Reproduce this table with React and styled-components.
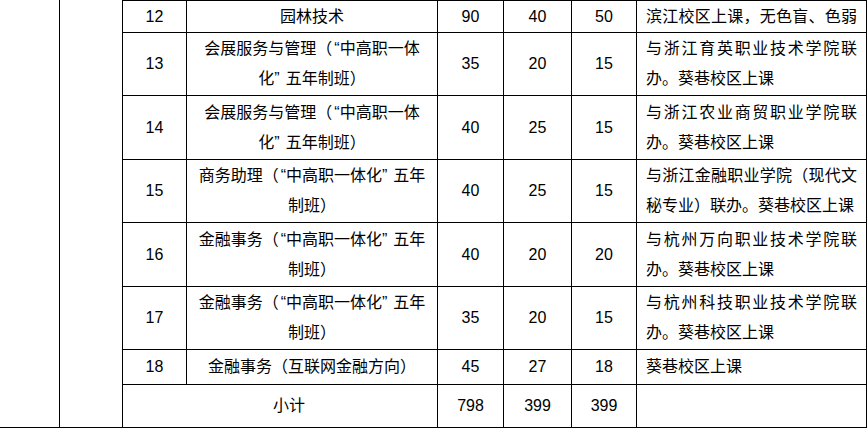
import React from "react";
import styled, { createGlobalStyle } from "styled-components";

const rows = [
	{ no: "12", name: ["园林技术"], total: "90", a: "40", b: "50", note: ["滨江校区上课，无色盲、色弱"], spread: true },
	{ no: "13", name: ["会展服务与管理（“中高职一体", "化”五年制班）"], total: "35", a: "20", b: "15", note: ["与浙江育英职业技术学院联", "办。葵巷校区上课"] },
	{ no: "14", name: ["会展服务与管理（“中高职一体", "化”五年制班）"], total: "40", a: "25", b: "15", note: ["与浙江农业商贸职业学院联", "办。葵巷校区上课"] },
	{ no: "15", name: ["商务助理（“中高职一体化”五年", "制班）"], total: "40", a: "25", b: "15", note: ["与浙江金融职业学院（现代文", "秘专业）联办。葵巷校区上课"] },
	{ no: "16", name: ["金融事务（“中高职一体化”五年", "制班）"], total: "40", a: "20", b: "20", note: ["与杭州万向职业技术学院联", "办。葵巷校区上课"] },
	{ no: "17", name: ["金融事务（“中高职一体化”五年", "制班）"], total: "35", a: "20", b: "15", note: ["与杭州科技职业技术学院联", "办。葵巷校区上课"] },
	{ no: "18", name: ["金融事务（互联网金融方向）"], total: "45", a: "27", b: "18", note: ["葵巷校区上课"] },
];

const GlobalStyle = createGlobalStyle`
	body {
		margin: 0;
		background: #fff;
	}
`;

const Sheet = styled.div`
	display: grid;
	grid-template-columns: 60px 63px 64px 251px 66px 68px 65px 230px;
	grid-template-rows: 33px 63px 64px 63px 64px 63px 35px 43px;
	width: 867px;
	font-family: "Liberation Sans", "Noto Sans CJK SC", sans-serif;
	font-size: 16px;
	color: #000;
`;

const Cell = styled.div`
	box-sizing: border-box;
	border-right: 1px solid #000;
	border-bottom: 1px solid #000;
	border-top: ${(p) => (p.$first ? "1px solid #000" : "none")};
	display: flex;
	flex-direction: column;
	justify-content: center;
	align-items: stretch;
	text-align: ${(p) => (p.$left ? "left" : "center")};
	padding: ${(p) => (p.$left ? "0 9px" : "0")};
	line-height: 30px;
	white-space: nowrap;
`;

const SpanCell = styled(Cell)`
	grid-row: 1 / -1;
`;

const TotalLabel = styled(Cell)`
	grid-column: 3 / 5;
	padding-left: 18px;
`;

const Line = styled.div`
	text-align: ${(p) => (p.$justify ? "justify" : "inherit")};
	text-align-last: ${(p) => (p.$justify ? "justify" : "auto")};
	white-space: ${(p) => (p.$justify ? "normal" : "nowrap")};
`;

const Quote = styled.span`
	padding-left: ${(p) => (p.$open ? "2px" : "0")};
	padding-right: ${(p) => (p.$open ? "0" : "6px")};
`;

const withQuotes = (text) =>
	text.split(/([“”])/).map((part, i) =>
		part === "“" || part === "”" ? (
			<Quote key={i} $open={part === "“"}>
				{part}
			</Quote>
		) : (
			part
		)
	);

export default function App() {
	return (
		<>
			<GlobalStyle />
			<Sheet>
				<SpanCell style={{ gridColumn: 1 }} />
				<SpanCell style={{ gridColumn: 2 }} />
				{rows.map((r, idx) => {
					const first = idx === 0;
					return (
						<React.Fragment key={r.no}>
							<Cell $first={first}>{r.no}</Cell>
							<Cell $first={first}>
								{r.name.map((l) => (
									<Line key={l}>{withQuotes(l)}</Line>
								))}
							</Cell>
							<Cell $first={first}>{r.total}</Cell>
							<Cell $first={first}>{r.a}</Cell>
							<Cell $first={first}>{r.b}</Cell>
							<Cell $first={first} $left>
								{r.note.map((l, i) => (
									<Line key={l} $justify={r.spread || i < r.note.length - 1}>
										{l}
									</Line>
								))}
							</Cell>
						</React.Fragment>
					);
				})}
				<TotalLabel>小计</TotalLabel>
				<Cell>798</Cell>
				<Cell>399</Cell>
				<Cell>399</Cell>
				<Cell $left />
			</Sheet>
		</>
	);
}
